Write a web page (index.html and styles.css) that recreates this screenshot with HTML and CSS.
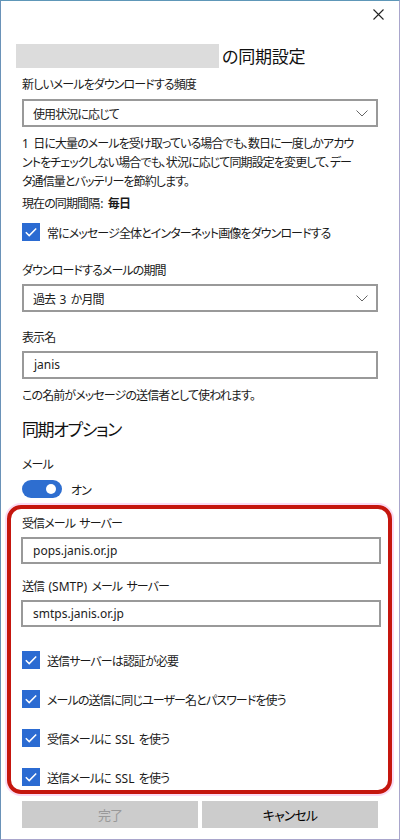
FILE: index.html
```html
<!DOCTYPE html>
<html lang="ja">
<head>
<meta charset="utf-8">
<title>同期設定</title>
<link rel="stylesheet" href="styles.css">
</head>
<body>
<div class="window">
  <div class="titlebar">
    <svg class="close" width="11" height="11" viewBox="0 0 11 11"><path d="M0.5 0.5L10.5 10.5M10.5 0.5L0.5 10.5" stroke="#222" stroke-width="1.1" fill="none"/></svg>
  </div>
  <div class="content">
    <div class="title"><span class="redact"></span><span class="title-text">の同期設定</span></div>
    <div class="label gap-l1">新しいメールをダウンロードする頻度</div>
    <div class="field select gap-s1"><span>使用状況に応じて</span><svg class="chev" width="12" height="7" viewBox="0 0 12 7"><path d="M0.5 0.5L6 6L11.5 0.5" stroke="#666" stroke-width="1" fill="none"/></svg></div>
    <p class="desc"><span class="en">1</span> 日に大量のメールを受け取っている場合でも、数日に一度しかアカウ<br>ントをチェックしない場合でも、状況に応じて同期設定を変更して、デー<br>タ通信量とバッテリーを節約します。</p>
    <div class="label gap-cur">現在の同期間隔<span class="sep">:</span> <b>毎日</b></div>
    <div class="check gap-chk"><span class="box"><svg width="18" height="18" viewBox="0 0 18 18"><path d="M3.8 9.2L7.2 12.6L14.2 5.4" stroke="#fff" stroke-width="1.5" fill="none"/></svg></span><span>常にメッセージ全体とインターネット画像をダウンロードする</span></div>
    <div class="label gap-l2">ダウンロードするメールの期間</div>
    <div class="field select gap-s2"><span>過去 <span class="en">3</span> か月間</span><svg class="chev" width="12" height="7" viewBox="0 0 12 7"><path d="M0.5 0.5L6 6L11.5 0.5" stroke="#666" stroke-width="1" fill="none"/></svg></div>
    <div class="label gap-l3">表示名</div>
    <div class="field gap-s2"><span class="val en">janis</span></div>
    <div class="label gap-help">この名前がメッセージの送信者として使われます。</div>
    <div class="heading">同期オプション</div>
    <div class="label gap-mail">メール</div>
    <div class="toggle-row"><span class="toggle"><span class="knob"></span></span><span>オン</span></div>
  </div>
  <div class="servers">
    <div class="label">受信メール サーバー</div>
    <div class="field small gap-s2"><span class="val en">pops.janis.or.jp</span></div>
    <div class="label gap-l4">送信 <span class="en">(SMTP)</span> メール サーバー</div>
    <div class="field small gap-s2"><span class="val en">smtps.janis.or.jp</span></div>
    <div class="checks">
      <div class="check"><span class="box"><svg width="18" height="18" viewBox="0 0 18 18"><path d="M3.8 9.2L7.2 12.6L14.2 5.4" stroke="#fff" stroke-width="1.5" fill="none"/></svg></span><span>送信サーバーは認証が必要</span></div>
      <div class="check"><span class="box"><svg width="18" height="18" viewBox="0 0 18 18"><path d="M3.8 9.2L7.2 12.6L14.2 5.4" stroke="#fff" stroke-width="1.5" fill="none"/></svg></span><span>メールの送信に同じユーザー名とパスワードを使う</span></div>
      <div class="check"><span class="box"><svg width="18" height="18" viewBox="0 0 18 18"><path d="M3.8 9.2L7.2 12.6L14.2 5.4" stroke="#fff" stroke-width="1.5" fill="none"/></svg></span><span>受信メールに <span class="en">SSL</span> を使う</span></div>
      <div class="check"><span class="box"><svg width="18" height="18" viewBox="0 0 18 18"><path d="M3.8 9.2L7.2 12.6L14.2 5.4" stroke="#fff" stroke-width="1.5" fill="none"/></svg></span><span>送信メールに <span class="en">SSL</span> を使う</span></div>
    </div>
  </div>
  <div class="buttons">
    <div class="btn disabled">完了</div>
    <div class="btn">キャンセル</div>
  </div>
</div>
</body>
</html>
```
FILE: styles.css
```css
* { box-sizing: border-box; }
html, body { margin: 0; padding: 0; background: #fff; }
body {
  font-family: "Noto Sans CJK JP", "Noto Sans", sans-serif;
  font-size: 12px;
  letter-spacing: -0.9px;
  word-spacing: 2.5px;
  line-height: 19px;
  color: #1a1a1a;
  font-feature-settings: "palt" 1;
}
.en {
  font-family: "Noto Sans", "Noto Sans CJK JP", sans-serif;
  letter-spacing: 0;
  word-spacing: 0;
  line-height: 1;
}
.sep {
  font-family: "Noto Sans", "Noto Sans CJK JP", sans-serif;
  letter-spacing: 0;
  line-height: 1;
  margin-left: 1px;
}
.window {
  width: 400px;
  height: 840px;
  border: 1px solid #a9a6cc;
  border-left-color: #6a92b8;
  border-top-color: #5e97b8;
  background: #fff;
  overflow: hidden;
}
.titlebar {
  height: 30px;
  display: flex;
  justify-content: flex-end;
  align-items: flex-start;
  padding: 8px 15px 0 0;
}
.content { padding: 0 21px; }
.title {
  margin-top: 13px;
  height: 24px;
  display: flex;
  align-items: center;
}
.redact {
  display: block;
  width: 203px;
  height: 24px;
  margin-left: -6px;
  background: #dcdcdc;
}
.title-text {
  margin-left: 3px;
  font-size: 17px;
  letter-spacing: -0.2px;
  line-height: 24px;
  color: #111;
}
.label { white-space: nowrap; height: 19px; }
.label b { font-weight: 700; }
.gap-l1 { margin-top: 6px; }
.gap-s1 { margin-top: 6px; }
.gap-s2 { margin-top: 5px; }
.gap-cur { margin-top: 3px; }
.gap-chk { margin-top: 11px; }
.gap-l2 { margin-top: 19px; }
.gap-l3 { margin-top: 15px; }
.gap-help { margin-top: 6px; }
.gap-mail { margin-top: 13px; }
.gap-l4 { margin-top: 12px; }
.field {
  height: 28px;
  border: 2px solid #999;
  display: flex;
  align-items: center;
  justify-content: space-between;
  padding: 0 8px 0 9px;
  color: #222;
}
.field.small { height: 27px; margin-right: -1px; margin-left: -1px; }
.field .val { padding-left: 1px; }
.desc {
  margin: 6px -8px 0 0;
  white-space: nowrap;
  height: 57px;
}
.check {
  display: flex;
  align-items: center;
  height: 18px;
  white-space: nowrap;
}
.check .box {
  width: 18px;
  height: 18px;
  flex: none;
  background: #2b6bd2;
  margin-right: 7px;
  display: block;
}
.check .box svg { display: block; }
.heading {
  margin-top: 13px;
  font-size: 17px;
  letter-spacing: -1.4px;
  line-height: 24px;
  color: #111;
}
.toggle-row {
  margin-top: 6px;
  height: 20px;
  display: flex;
  align-items: center;
}
.toggle {
  width: 40px;
  height: 18px;
  border-radius: 9px;
  background: #2e6ed0;
  position: relative;
  margin-right: 9px;
}
.knob {
  position: absolute;
  right: 6px;
  top: 4px;
  width: 10px;
  height: 10px;
  border-radius: 50%;
  background: #fff;
}
.servers {
  margin: 6px 7px 0 6px;
  border: 4px solid #c5160e;
  border-radius: 14px;
  padding: 4px 8px 4px 11px;
  box-shadow: 0 0 0 2px #fbd9f4;
}
.checks {
  margin-top: 24px;
  display: flex;
  flex-direction: column;
  gap: 21px;
}
.buttons {
  margin-top: 7px;
  padding: 0 21px;
  display: flex;
  gap: 4px;
}
.btn {
  flex: 1;
  height: 27px;
  background: #cccccc;
  display: flex;
  align-items: center;
  justify-content: center;
  color: #000;
  font-size: 13px;
}
.btn.disabled { color: #999; }
```
